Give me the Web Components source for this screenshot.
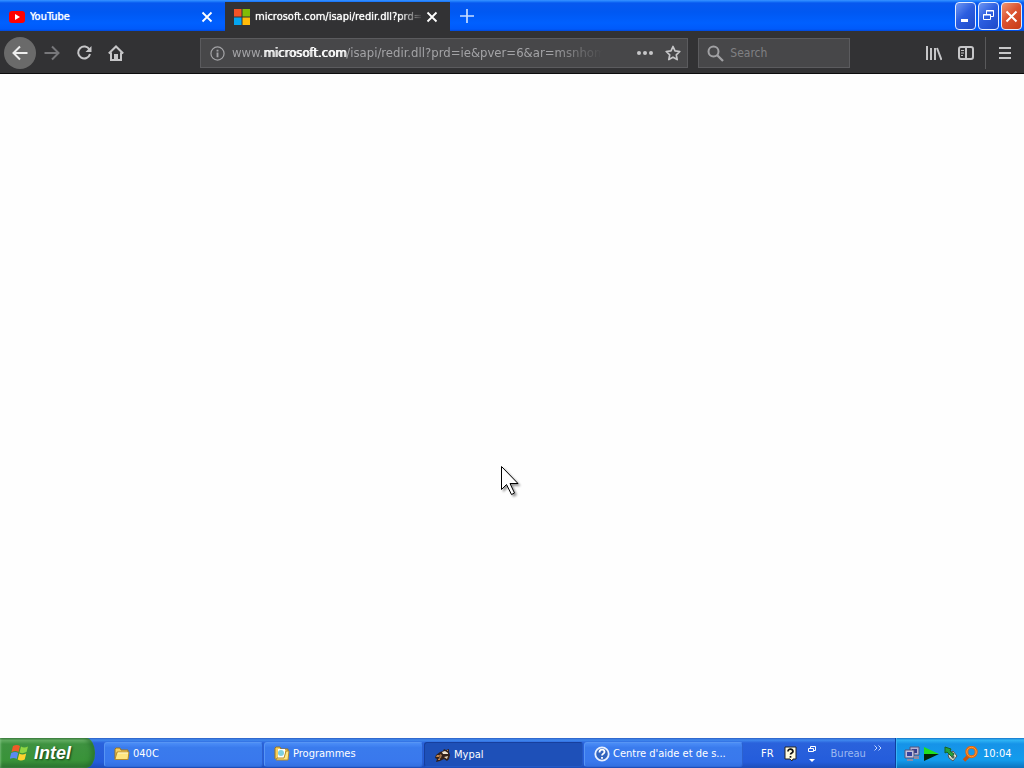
<!DOCTYPE html>
<html lang="fr">
<head>
<meta charset="utf-8">
<title>Mypal</title>
<style>
html, body { height: 100%; }
body { margin: 0; overflow: hidden; font-family: "DejaVu Sans Condensed", "Noto Sans", sans-serif; font-size: 11px; }
</style>
</head>
<body>
<desktop-shell>
  <tab-strip slot="top">
    <browser-tab>
      <svg slot="icon" width="16" height="16" viewBox="0 0 16 16"><rect y="2" width="16" height="12" rx="3" fill="#f00"/><path d="M6 5l5 3-5 3z" fill="#fff"/></svg>
      YouTube
    </browser-tab>
    <browser-tab selected>
      <svg slot="icon" width="16" height="16" viewBox="0 0 16 16"><path d="M0 0h7.5v7.5H0z" fill="#f35325"/><path d="M8.500 0H16v7.500H8.500z" fill="#81bc06"/><path d="M0 8.500h7.500V16H0z" fill="#05a6f0"/><path d="M8.500 8.500H16V16H8.500z" fill="#ffba08"/></svg>
      microsoft.com/isapi/redir.dll?prd=ie
    </browser-tab>
  </tab-strip>
  <nav-bar slot="top"></nav-bar>
  <page-view></page-view>
  <task-bar slot="bottom">
    <task-button>
      <svg slot="icon" width="16" height="16" viewBox="0 0 16 16"><path d="M1 13V3l1-1h4l1 2h7v3" fill="#f7cf5c" stroke="#9a7420"/><path d="M1 13.500L3 6h12l-1 7.500z" fill="#ffe680" stroke="#b58a2c"/><path d="M4 7h10" stroke="#fff8cf"/></svg>040C
    </task-button>
    <task-button>
      <svg slot="icon" width="16" height="16" viewBox="0 0 16 16"><path d="M1 13V2l1-1h4l1 2h7v4" fill="#f7cf5c" stroke="#9a7420"/><path d="M4 3h7v9H4z" fill="#fff"/><circle cx="7" cy="7" r="3" fill="#7fd0e0"/><path d="M2 14l1-2h7l2-7h3l-1 9z" fill="#ffe680" stroke="#b58a2c"/></svg>Programmes
    </task-button>
    <task-button pressed>
      <svg slot="icon" width="16" height="16" viewBox="0 0 16 16"><path d="M5 5l3-1 1-2 2 1 3-1v3l1 3-1 4-2 2-3-2-2 1-2 1-4 1 1-3-2-1 1-3z" fill="#33211a"/><path d="M7 5l3-1 3 2v1L8 7z" fill="#efe3cf"/><path d="M2 8h3l-1 2H1zM3 12l2-1v2H3z" fill="#c5854c"/><path d="M5 7l2 1-1 3-2 1z" fill="#a4754d"/><path d="M9 10l4-1-1 3z" fill="#e9d5b6"/><path d="M12 3h1v1h-1z" fill="#c5854c"/></svg>Mypal
    </task-button>
    <task-button>
      <svg slot="icon" width="16" height="16" viewBox="0 0 16 16"><circle cx="8" cy="8" r="6.700" fill="#3264bd" stroke="#e9f1ff" stroke-width="1.800"/><path d="M5.500 6.500c0-4 5-3.500 5-.5 0 1.800-2.500 1.800-2.500 3.500M8 11v1.700" fill="none" stroke="#fff" stroke-width="1.800"/></svg>Centre d'aide et de s...
    </task-button>
  </task-bar>
</desktop-shell>

<script>
function define(name, html, setup) {
  const template = document.createElement('template');
  template.innerHTML = html;
  customElements.define(name, class extends HTMLElement {
    constructor() {
      super();
      this.attachShadow({ mode: 'open' }).append(template.content.cloneNode(true));
    }
    connectedCallback() { if (setup) setup(this); }
  });
}

define('desktop-shell', `
<style>
:host { display: flex; flex-direction: column; height: 100vh; }
main { flex: 1; min-height: 0; display: flex; }
</style>
<slot name="top"></slot><main><slot></slot></main><slot name="bottom"></slot>`);

define('window-button', `
<style>
:host { display: block; }
button { display: grid; place-items: center; box-sizing: border-box; width: 21px; height: 28px; padding: 0; border: 1px solid #e4edff; border-radius: 4px; background: linear-gradient(135deg, #6f97f2, #2c5ee0 45%, #1d49c8); }
:host([kind=close]) button { background: linear-gradient(135deg, #ee9674, #dc5331 45%, #c73a15); }
</style>
<button type="button"><slot></slot></button>`, el => el.shadowRoot.querySelector('button').setAttribute('aria-label', el.getAttribute('label')));

define('browser-tab', `
<style>
:host { display: block; flex: 0 1 225px; min-width: 0; color: #fff; }
.tab { box-sizing: border-box; height: 29px; padding: 0 9px; display: flex; align-items: center; gap: 5px; }
:host([selected]) .tab { background: #323234; }
.title { flex: 1; min-width: 0; overflow: hidden; white-space: nowrap; font-size: 11px; line-height: 16px; text-shadow: 0 0 1px #fff; }
:host([selected]) .title { -webkit-mask-image: linear-gradient(90deg, #000 calc(100% - 24px), transparent); mask-image: linear-gradient(90deg, #000 calc(100% - 24px), transparent); }
button { width: 18px; height: 18px; padding: 0; border: 0; background: none; display: grid; place-items: center; margin-left: -5px; }
::slotted(svg) { display: block; flex: none; }
</style>
<div class="tab"><slot name="icon"></slot><span class="title"><slot></slot></span>
<button type="button" aria-label="Close tab"><svg width="12" height="12" viewBox="0 0 12 12"><path d="M1.500 1.500l9 9m0-9l-9 9" stroke="#fff" stroke-width="1.800"/></svg></button></div>`);

define('tab-strip', `
<style>
:host { display: flex; flex: none; box-sizing: border-box; height: 31px; padding-top: 2px; background: linear-gradient(#3a91ff 0, #2384ff 1px, #0758ef 3px, #0058f2 12px, #0060ff 23px, #005afa 29px, #0049dd 31px); }
.tabs { display: flex; flex: 1; min-width: 0; }
.new { width: 33px; height: 28px; padding: 0; border: 0; background: none; display: grid; place-items: center; }
.controls { display: flex; gap: 2px; padding-right: 2px; }
svg { display: block; }
</style>
<div class="tabs"><slot></slot>
<button class="new" type="button" aria-label="New tab"><svg width="14" height="14" viewBox="0 0 14 14"><path d="M7 0v14M0 7h14" stroke="#c7ddff" stroke-width="1.700"/></svg></button></div>
<div class="controls">
<window-button label="Minimize"><svg width="15" height="15" viewBox="0 0 15 15"><path d="M3 10h7v3H3z" fill="#fff"/></svg></window-button>
<window-button label="Restore"><svg width="15" height="15" viewBox="0 0 15 15"><path d="M5.500 5V1.500h7v6H10M5 2h8M2.500 5.500h7v5h-7zM2 6h8" fill="none" stroke="#fff"/></svg></window-button>
<window-button kind="close" label="Close"><svg width="15" height="15" viewBox="0 0 15 15"><path d="M2.500 2.500l10 10m0-10l-10 10" stroke="#fff" stroke-width="2"/></svg></window-button>
</div>`);

define('nav-bar', `
<style>
:host { display: flex; flex: none; box-sizing: border-box; height: 43px; padding: 2px 3px 0 4px; align-items: center; background: #323234; border-bottom: 1px solid #0c0c0d; font-size: 13px; }
button { width: 32px; height: 32px; padding: 0; border: 0; background: none; color: #c6c6c8; display: grid; place-items: center; flex: none; }
.back { border-radius: 50%; background: #6a6a6a; color: #eee; }
.off { color: #77777a; }
svg { display: block; flex: none; fill: none; stroke: currentColor; stroke-width: 2; }
.space { flex: 0 1 68px; }
.field { box-sizing: border-box; height: 30px; border: 1px solid #5b5b5e; background: #474749; display: flex; align-items: center; position: relative; color: #a3a3a6; }
.url { flex: 1 1 489px; min-width: 0; padding-left: 9px; }
.address { flex: 1; min-width: 0; margin-left: 7px; overflow: hidden; white-space: nowrap; line-height: 18px; -webkit-mask-image: linear-gradient(90deg, #000 calc(100% - 50px), transparent); mask-image: linear-gradient(90deg, #000 calc(100% - 50px), transparent); }
.address b { font-weight: normal; color: #fafafa; text-shadow: 1px 0 #fafafa; }
.url input { position: absolute; inset: 0 60px 0 32px; background: none; }
input { border: 0; padding: 0; outline: 0; color: #eee; background: none; font: inherit; min-width: 0; }
.url button { width: 28px; height: 28px; }
.actions { margin-left: 28px; }
.search { flex: 0 1 152px; min-width: 0; margin-left: 10px; padding-left: 8px; gap: 6px; color: #a1a1a4; }
.search input { flex: 1; font-size: 12px; }
input::placeholder { color: #808083; opacity: 1; }
.menu { border-left: 1px solid #59595b; width: 36px; padding-left: 3px; margin-left: 3px; }
</style>
<button class="back" type="button" aria-label="Back"><svg width="16" height="16" viewBox="0 0 16 16"><path d="M15.500 8H1.500M8 1.500L1.500 8 8 14.500"/></svg></button>
<button class="off" type="button" aria-label="Forward"><svg width="16" height="16" viewBox="0 0 16 16" stroke-width="1.500"><path d="M.5 8h14M8 1.500L14.500 8 8 14.500"/></svg></button>
<button type="button" aria-label="Reload"><svg width="16" height="16" viewBox="0 0 16 16"><path d="M13.500 4.700A6 6 0 1 0 14 9"/><path d="M15.500 1v6h-6z" fill="currentColor" stroke="none"/></svg></button>
<button type="button" aria-label="Home"><svg width="16" height="16" viewBox="0 0 16 16"><path d="M.8 8.500L8 1.500l7.200 7M3 7.500V15h10V7.500"/><path d="M6 15V9h4v6z" fill="currentColor" stroke="none"/></svg></button>
<div class="space"></div>
<div class="field url">
<svg width="15" height="15" viewBox="0 0 16 16" style="stroke-width:1.300"><circle cx="8" cy="8" r="7"/><path d="M8 7v5M8 4v1.800" stroke-width="2"/></svg>
<span class="address">www.<b>microsoft.com</b>/isapi/redir.dll?prd=ie&amp;pver=6&amp;ar=msnhome</span>
<input type="text" aria-label="Address">
<button class="actions" type="button" aria-label="Page actions"><svg width="16" height="16" viewBox="0 0 16 16"><g fill="currentColor" stroke="none"><circle cx="2" cy="8" r="2"/><circle cx="8" cy="8" r="2"/><circle cx="14" cy="8" r="2"/></g></svg></button>
<button type="button" aria-label="Bookmark"><svg width="16" height="16" viewBox="0 0 16 16"><path d="M8 1.500l2 4.400 4.800.6-3.500 3.300.9 4.800L8 12.200l-4.200 2.400.9-4.800L1.200 6.500 6 5.900z" stroke-width="1.700" stroke-linejoin="round"/></svg></button>
</div>
<label class="field search"><svg width="17" height="17" viewBox="0 0 17 17"><circle cx="6.500" cy="6.500" r="5"/><path d="M10 10l6 6" stroke-width="2.300"/></svg><input type="text" placeholder="Search" aria-label="Search"></label>
<div class="space"></div>
<button type="button" aria-label="Library"><svg width="16" height="16" viewBox="0 0 16 16"><path d="M1 1v14M5 3v12M9 3v12M11 3l4.500 12"/></svg></button>
<button type="button" aria-label="Sidebar"><svg width="16" height="16" viewBox="0 0 16 16"><rect x="1" y="2" width="14" height="12" rx="2"/><path d="M8 2v12"/><path d="M3 5.500h3M3 8h3M3 10.500h2" stroke-width="1"/></svg></button>
<button class="menu" type="button" aria-label="Menu"><svg width="12" height="14" viewBox="0 0 12 14"><path d="M0 2h12M0 7h12M0 12h12"/></svg></button>`);

define('page-view', `
<style>
:host { display: block; flex: 1; background: #fefefe; position: relative; }
svg { position: absolute; left: 500px; top: 391px; filter: drop-shadow(2px 2px 1px #0006); }
</style>
<svg width="20" height="32" viewBox="0 0 20 32" aria-hidden="true"><path d="M1.500 1.500v23l5-5 5 10 3-1.500-4.500-9.500h8z" fill="#fff" stroke="#000"/></svg>`);

define('task-button', `
<style>
:host { display: block; flex: 0 1 160px; min-width: 0; }
button { box-sizing: border-box; width: calc(100% - 1px); height: 25px; padding: 0 9px; display: flex; align-items: center; gap: 3px; border: 1px solid #5795f4; border-right-color: #2c61ce; border-bottom-color: #2f69d9; border-radius: 3px; background: linear-gradient(#4b8df7, #3a7bed 20%, #3978ed 80%, #3370e2); color: #fff; font: inherit; line-height: 16px; text-align: left; }
:host([pressed]) button { background: #1e50b8; border-color: #173f9d #2459c5 #2459c5 #173f9d; padding-left: 10px; padding-top: 2px; }
span { overflow: hidden; white-space: nowrap; }
::slotted(svg) { display: block; flex: none; }
</style>
<button type="button"><slot name="icon"></slot><span><slot></slot></span></button>`);

define('task-bar', `
<style>
:host { display: flex; flex: none; height: 30px; color: #fff; line-height: 16px; background: linear-gradient(#2b5fc4 0, #4089ef 2px, #2a62dc 5px, #245cdb 24px, #1d4db8 30px); }
.start { flex: none; box-sizing: border-box; width: 95px; height: 30px; padding: 0 0 0 10px; border: 0; border-radius: 0 9px 9px 0 / 0 15px 15px 0; display: flex; align-items: center; gap: 4px; color: #fff; background: linear-gradient(#2f6e31 0, #68b266 2px, #3e9240 6px, #399339 22px, #2c7430 30px); box-shadow: inset -4px 0 4px #236b2999, inset 1px 0 2px #9ad69a88; font: italic bold 18px/24px "Liberation Sans", sans-serif; text-shadow: 1px 1px 2px #123a12; }
.tasks { flex: 1; min-width: 0; display: flex; align-items: center; padding: 2px 0 0 9px; }
.bar { flex: none; box-sizing: border-box; width: 151px; padding: 1px 0 0 17px; display: flex; align-items: center; gap: 10px; }
.desk { color: #9db9f0; margin-left: 4px; }
.desk + svg { margin: 0 0 12px -2px; }
.tray { flex: none; box-sizing: border-box; width: 129px; padding: 1px 0 0 8px; display: flex; align-items: center; gap: 3px; border-left: 1px solid #0d3f9e; box-shadow: inset 1px 0 #3bb2f5; background: linear-gradient(#1573c9 0, #30b5f5 2px, #1693e8 6px, #129ced 22px, #0c72bd 30px); }
time { margin-left: 2px; }
svg { display: block; flex: none; }
</style>
<button class="start" type="button"><svg width="20" height="20" viewBox="0 0 20 20"><path d="M3 3q4-2 7 0L8.500 9q-3-2-7 0z" fill="#ef5b28"/><path d="M11 3.500q3 2 7 0L16.500 9q-4 2-7 .5z" fill="#8fd643"/><path d="M1.200 10q4-2 7 0l-1.500 6q-3-2-7 0z" fill="#5b8af0"/><path d="M9.200 10.500q3 2 7 0l-1.500 6q-4 2-7 0z" fill="#ffd22e"/></svg><span>Intel</span></button>
<div class="tasks"><slot></slot></div>
<div class="bar"><span>FR</span>
<svg width="13" height="15" viewBox="0 0 13 15"><path d="M1 1h11v12H9l-1 2-2-2H1z" fill="#fffbe0" stroke="#222"/><path d="M4 5.500c0-3.500 5-3 5 0 0 1.500-2.500 1.500-2.500 3M6.500 10v1.700" fill="none" stroke="#111" stroke-width="1.700"/></svg>
<svg width="10" height="18" viewBox="0 0 10 18"><path d="M3.500 3V1.500h5v4H7M1.500 3.500h5v3h-5z" fill="none" stroke="#fff"/><path d="M2 14h6l-3 3z" fill="#fff"/></svg>
<span class="desk">Bureau</span>
<svg width="8" height="6" viewBox="0 0 8 6"><path d="M.5 .5L3 3 .5 5.500M4.500 .5L7 3 4.500 5.500" fill="none" stroke="#c4d6ff"/></svg></div>
<div class="tray">
<svg width="16" height="16" viewBox="0 0 16 16"><path d="M6 1h9v8H6z" fill="#b5b4d6" stroke="#55557d"/><path d="M8 3h5v4H8z" fill="#353a8b"/><path d="M1 4h9v8H1z" fill="#c2c1de" stroke="#55557d"/><path d="M3 6h5v4H3z" fill="#35439d"/><path d="M3 13h6v2H3zM10 10h5v3h-5z" fill="#8d8aa5"/></svg>
<svg width="17" height="16" viewBox="0 0 17 16"><path d="M1 1l15 7H1z" fill="#20df20"/><path d="M1 15l15-7H1z" fill="#052505"/></svg>
<svg width="16" height="16" viewBox="0 0 16 16"><path d="M5 9l5-4 4 5-4 5-4-3z" fill="#d8dfcb" stroke="#555"/><path d="M2 1l6 2-1 2 4 3-2 3-5-5-2 1z" fill="#24a33b" stroke="#186128"/><circle cx="10" cy="11" r="1.500" fill="#4c665a"/></svg>
<svg width="16" height="16" viewBox="0 0 16 16"><path d="M7 9.500L2 14.500" stroke="#c9550f" stroke-width="3.500"/><circle cx="9.500" cy="6" r="4.700" fill="none" stroke="#e0670f" stroke-width="3"/><circle cx="9.500" cy="6" r="4.700" fill="none" stroke="#ff9d38" stroke-width="1"/></svg>
<time>10:04</time></div>`);
</script>
</body>
</html>
